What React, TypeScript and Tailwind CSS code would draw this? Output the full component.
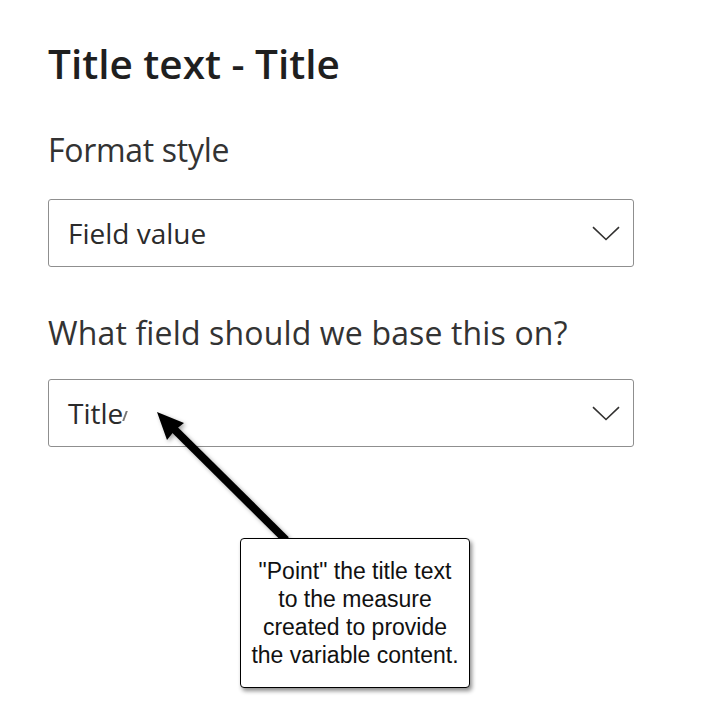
import React from "react";

function Chevron() {
  return (
    <svg width="28" height="15" viewBox="0 0 28 15" fill="none" className="shrink-0">
      <path d="M1 1.2 L14 13.5 L27 1.2" stroke="#323130" strokeWidth="1.6" strokeLinejoin="miter" />
    </svg>
  );
}

function Dropdown({ value, extra }: { value: string; extra?: boolean }) {
  return (
    <div className="flex h-[68px] w-[586px] items-center justify-between rounded-[3px] border border-[#8f8f8f] pl-[19px] pr-[13px]">
      <span className="flex items-end text-[28px] leading-[28px] text-[#2b2b2b]">
        {value}
        {extra && <span className="mb-[6px] ml-[1px] inline-block h-[10px] w-[2px] skew-x-[-20deg] bg-[#777]" />}
      </span>
      <Chevron />
    </div>
  );
}

export default function App() {
  return (
    <div
      className="relative h-[728px] w-[709px] overflow-hidden bg-white pl-[48px] pt-[44px]"
      style={{ fontFamily: '"Open Sans", "Noto Sans", sans-serif' }}
    >
      <h1 className="text-[40.5px] font-semibold leading-[40px] text-[#1f1f1f]">Title text - Title</h1>
      <div className="mt-[50px] text-[32px] leading-[32px] tracking-[-0.3px] text-[#333]">Format style</div>
      <div className="mt-[33px]">
        <Dropdown value="Field value" />
      </div>
      <div className="mt-[50px] text-[32px] leading-[31px] tracking-[0.15px] text-[#333]">
        What field should we base this on?
      </div>
      <div className="mt-[31px]">
        <Dropdown value="Title" extra />
      </div>

      <svg
        className="pointer-events-none absolute left-0 top-0 drop-shadow-[2px_2px_2px_rgba(0,0,0,0.35)]"
        width="709"
        height="728"
        viewBox="0 0 709 728"
      >
        <line x1="286" y1="540" x2="174" y2="429" stroke="#000" strokeWidth="8" />
        <polygon points="157,412 184,423 175,430 167,440" fill="#000" />
      </svg>

      <div
        className="absolute left-[240px] top-[538px] flex h-[150px] w-[230px] items-center justify-center rounded-[4px] border-[1.5px] border-black bg-white text-center text-[23px] leading-[28px] text-[#111] shadow-[2px_3px_4px_rgba(0,0,0,0.45)]"
        style={{ fontFamily: '"Liberation Sans", Arial, sans-serif' }}
      >
        <div className="whitespace-nowrap">
          "Point" the title text
          <br />
          to the measure
          <br />
          created to provide
          <br />
          the variable content.
        </div>
      </div>
    </div>
  );
}
